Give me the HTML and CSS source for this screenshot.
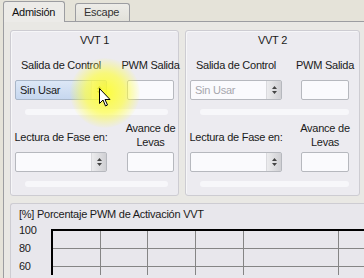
FILE: index.html
```html
<!DOCTYPE html>
<html>
    <head>
        <title>VVT</title>
        <meta charset="utf-8"/>
        <link rel="stylesheet" href="styles.css">
    </head>
    <body>

    <div class="tabs">
        <div class="tab active">Admisión</div>
        <div class="tab">Escape</div>
    </div>

    <div class="page">
        <div class="groups">
            <div class="group g1">
                <div class="groupTitle">VVT 1</div>
                <div class="fields first">
                    <div class="label">Salida de Control</div>
                    <div class="label">PWM Salida</div>
                    <div class="combo hover"><span class="comboText">Sin Usar</span><span class="spin"><svg width="7" height="10" viewBox="0 0 7 10"><path d="M3.5 1 L6 4 L1 4 Z M1 6 L6 6 L3.5 9 Z" fill="#444"/></svg></span></div>
                    <div class="textbox"></div>
                </div>
                <div class="bar"></div>
                <div class="fields second">
                    <div class="label low">Lectura de Fase en:</div>
                    <div class="label">Avance de<br>Levas</div>
                    <div class="combo"><span class="comboText"></span><span class="spin"><svg width="7" height="10" viewBox="0 0 7 10"><path d="M3.5 1 L6 4 L1 4 Z M1 6 L6 6 L3.5 9 Z" fill="#444"/></svg></span></div>
                    <div class="textbox"></div>
                </div>
                <div class="bar"></div>
            </div>

            <div class="group g2">
                <div class="groupTitle">VVT 2</div>
                <div class="fields first">
                    <div class="label">Salida de Control</div>
                    <div class="label">PWM Salida</div>
                    <div class="combo disabled"><span class="comboText">Sin Usar</span><span class="spin"><svg width="7" height="10" viewBox="0 0 7 10"><path d="M3.5 1 L6 4 L1 4 Z M1 6 L6 6 L3.5 9 Z" fill="#444"/></svg></span></div>
                    <div class="textbox"></div>
                </div>
                <div class="bar"></div>
                <div class="fields second">
                    <div class="label low">Lectura de Fase en:</div>
                    <div class="label">Avance de<br>Levas</div>
                    <div class="combo"><span class="comboText"></span><span class="spin"><svg width="7" height="10" viewBox="0 0 7 10"><path d="M3.5 1 L6 4 L1 4 Z M1 6 L6 6 L3.5 9 Z" fill="#444"/></svg></span></div>
                    <div class="textbox"></div>
                </div>
                <div class="bar"></div>
            </div>
        </div>

        <div class="chartGroup">
            <div class="chartTitle">[%] Porcentaje PWM de Activación VVT</div>
            <div class="chartBody">
                <div class="axis">
                    <span>100</span>
                    <span>80</span>
                    <span>60</span>
                </div>
                <div class="plot"></div>
            </div>
        </div>
    </div>

    <!-- resaltado del clic del raton -->
    <div class="glow"></div>
    <svg class="cursor" width="12" height="19" viewBox="0 0 12 19">
        <path d="M0.5 0.5 L0.5 15.5 L4 12 L6.5 18 L8.5 17 L6 11.5 L11 11.5 Z" fill="#fff" stroke="#000" stroke-width="1"/>
    </svg>

    </body>
</html>
```

FILE: styles.css
```css
body {
    margin: 0;
    padding: 0;
    width: 364px;
    height: 278px;
    overflow: hidden;
    background-color: #E5E3D9;
    font-family: "Liberation Sans", Arial, sans-serif;
    font-size: 11px;
    letter-spacing: -0.25px;
    color: #1a1a1a;
    position: relative;
}

/**** TABS ****/

.tabs {
    display: flex;
    align-items: flex-end;
    height: 21px;
    padding-left: 3px;
}

.tab {
    height: 17px;
    line-height: 17px;
    padding: 0 10px 0 8px;
    margin-left: -1px;
    border: 1px solid #9C9DA1;
    border-bottom: none;
    border-radius: 3px 3px 0 0;
    background: linear-gradient(#EDECE8, #E2E1DA);
    color: #333;
}

.tab.active {
    height: 20px;
    line-height: 21px;
    width: 42px;
    margin-left: 0;
    margin-bottom: -1px;
    margin-right: 11px;
    background: #ECEBE8;
    position: relative;
    color: #111;
}

.page {
    margin-left: 3px;
    border-top: 1px solid #9C9DA1;
    border-left: 1px solid #9C9DA1;
    background-color: #E9E8E4;
    padding: 8px 0 0 6px;
    height: 260px;
}

/**** GROUPS ****/

.groups {
    display: flex;
    gap: 6px;
}

.group {
    border: 1px solid #CDCCD2;
    border-radius: 3px;
    box-shadow: inset 1px 1px 0 #F6F6F8;
    background-color: #ECEBF0;
    padding: 3px 0 8px 4px;
}

.g1 {
    width: 163px;
}

.g2 {
    width: 169px;
}

.groupTitle {
    text-align: center;
    line-height: 13px;
    height: 13px;
    padding-right: 4px;
}

.fields {
    display: grid;
    grid-template-columns: 92px 47px;
    column-gap: 20px;
    align-items: end;
}

.g2 .fields {
    column-gap: 19px;
    grid-template-columns: 92px 48px;
}

.fields.first {
    margin-top: 11px;
    row-gap: 8px;
}

.fields.second {
    margin-top: 6px;
    row-gap: 3px;
}

.label {
    justify-self: center;
    text-align: center;
    line-height: 14px;
    white-space: nowrap;
}

.label.low {
    margin-bottom: 5px;
}

.combo {
    display: flex;
    height: 18px;
    border: 1px solid #B6B8BE;
    border-radius: 2px;
    background: #FAFAFD;
}

.comboText {
    flex: 1;
    padding-left: 4px;
    line-height: 18px;
}

.combo.hover {
    background: linear-gradient(#DCE7F6, #C6D7EF);
    border-color: #A8B6C8;
}

.combo.disabled .comboText {
    color: #A7A7AD;
}

.spin {
    width: 14px;
    background: linear-gradient(to right, #ECECEE, #CFCFD3);
    border-left: 1px solid #DADADE;
    display: flex;
    align-items: center;
    justify-content: center;
}

.textbox {
    height: 18px;
    border: 1px solid #B6B8BE;
    border-radius: 2px;
    background: #FAFAFD;
}

.bar {
    height: 6px;
    margin: 9px 10px 0 10px;
    border-radius: 3px;
    background-color: #F7F7FA;
}

/**** CHART ****/

.chartGroup {
    margin-top: 7px;
    border: 1px solid #CDCCD2;
    border-right: none;
    border-radius: 3px 0 0 0;
    background-color: #E8E7EC;
    padding: 4px 0 0 8px;
    height: 80px;
}

.chartTitle {
    line-height: 13px;
    white-space: nowrap;
}

.chartBody {
    display: flex;
}

.axis {
    width: 32px;
    display: flex;
    flex-direction: column;
}

.axis span {
    line-height: 18px;
}

.plot {
    flex: 1;
    margin-top: 8px;
    border-left: 2px solid #000;
    border-top: 2px solid #000;
    background-color: #E8E7EC;
    background-image:
        repeating-linear-gradient(to right, transparent 0 46.7px, #858585 46.7px 47.7px),
        repeating-linear-gradient(to bottom, transparent 0 17px, #858585 17px 18px);
}

/**** CURSOR ****/

.glow {
    position: absolute;
    left: 70px;
    top: 58px;
    width: 70px;
    height: 70px;
    border-radius: 50%;
    background: radial-gradient(circle, rgba(255, 255, 40, 0.9) 0, rgba(255, 255, 60, 0.65) 40%, rgba(255, 255, 80, 0) 72%);
    pointer-events: none;
}

.cursor {
    position: absolute;
    left: 99px;
    top: 88px;
}
```
